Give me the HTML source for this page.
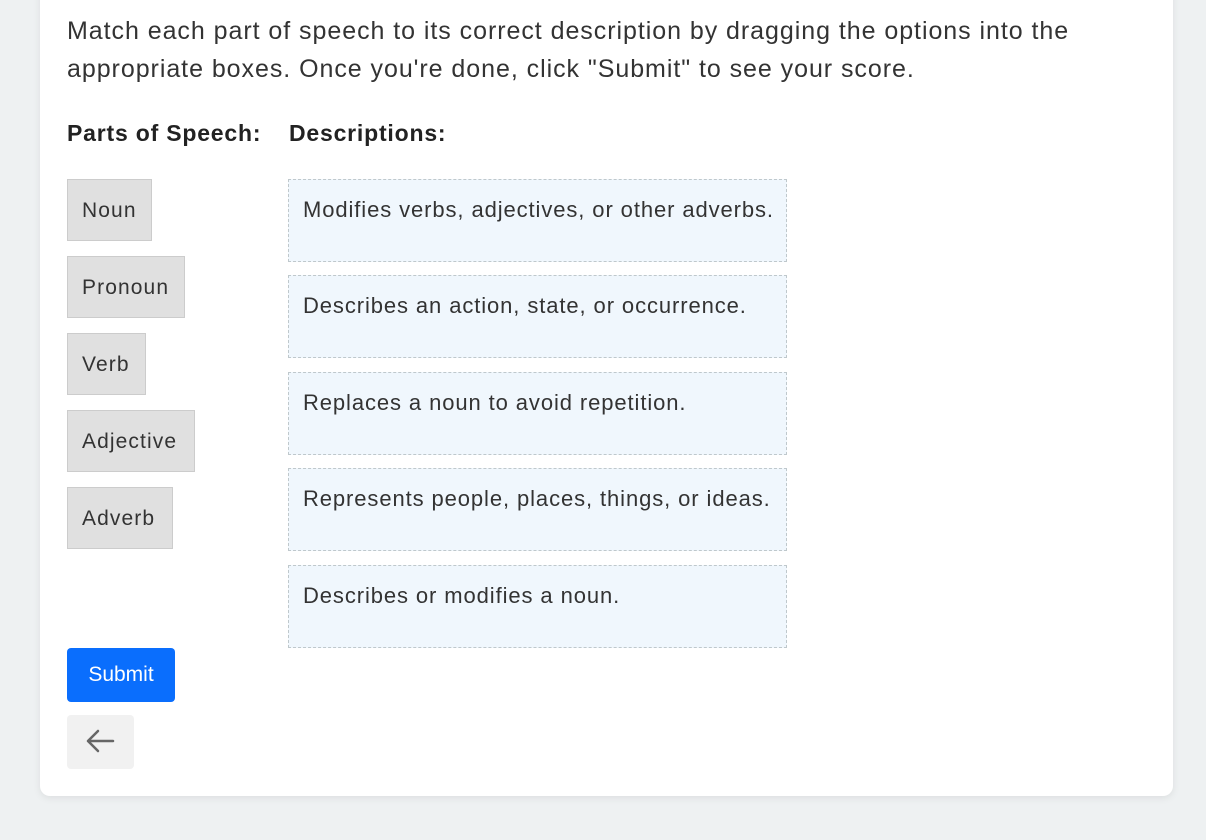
<!DOCTYPE html>
<html><head><style>
body{margin:0;background:#eef1f2;width:1206px;height:840px;overflow:hidden;font-family:"Liberation Sans",Arial,sans-serif;color:#333}
.card{position:absolute;left:40px;top:-20px;width:1133px;height:816px;background:#fff;border-radius:10px;box-shadow:0 2px 8px rgba(0,0,0,.08)}
.p{position:absolute;left:67px;top:12px;font-size:25px;line-height:38px;color:#333;letter-spacing:0.95px;white-space:nowrap}
.h{position:absolute;top:120px;font-size:23px;font-weight:bold;color:#222;letter-spacing:0.8px}
.w{position:absolute;left:67px;height:62px;background:#e0e0e0;border:1px solid #ccc;box-sizing:border-box;font-size:21px;line-height:62px;padding-left:14px;color:#333;letter-spacing:1.1px}
.d{position:absolute;left:288px;width:499px;height:83px;background:#f0f7fd;border:1px dashed #bfc8cc;box-sizing:border-box;font-size:22px;padding:17px 0 0 14px;color:#333;letter-spacing:0.9px;white-space:nowrap}
.sub{position:absolute;left:67px;top:648px;width:108px;height:54px;background:#0a6efd;border-radius:4px;color:#fff;font-size:21px;line-height:54px;text-align:center}
.back{position:absolute;left:67px;top:715px;width:67px;height:54px;background:#f1f1f1;border-radius:4px}
</style></head><body>
<div class="card"></div>
<div class="p">Match each part of speech to its correct description by dragging the options into the<br>appropriate boxes. Once you're done, click "Submit" to see your score.</div>
<div class="h" style="left:67px">Parts of Speech:</div>
<div class="h" style="left:289px">Descriptions:</div>
<div class="w" style="top:179px;width:85px">Noun</div>
<div class="w" style="top:256px;width:118px">Pronoun</div>
<div class="w" style="top:333px;width:79px">Verb</div>
<div class="w" style="top:410px;width:128px">Adjective</div>
<div class="w" style="top:487px;width:106px">Adverb</div>
<div class="d" style="top:179px">Modifies verbs, adjectives, or other adverbs.</div>
<div class="d" style="top:275px">Describes an action, state, or occurrence.</div>
<div class="d" style="top:372px">Replaces a noun to avoid repetition.</div>
<div class="d" style="top:468px">Represents people, places, things, or ideas.</div>
<div class="d" style="top:565px">Describes or modifies a noun.</div>
<div class="sub">Submit</div>
<div class="back"><svg width="67" height="54" viewBox="0 0 67 54"><path d="M46 26H21M31 16L21 26L31 36" fill="none" stroke="#666" stroke-width="2.5" stroke-linecap="round" stroke-linejoin="round"/></svg></div>
</body></html>
